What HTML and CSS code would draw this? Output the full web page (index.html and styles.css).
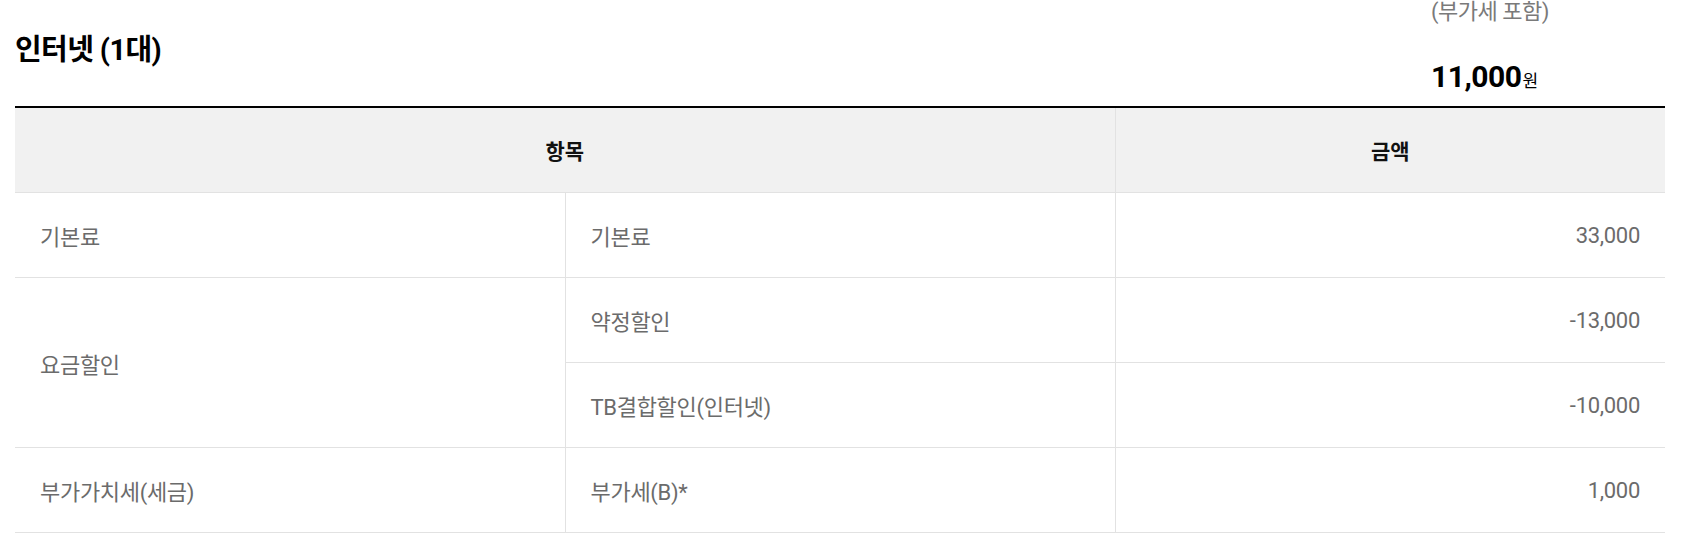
FILE: index.html
```html
<!DOCTYPE html>
<html lang="ko">
<head>
<meta charset="utf-8">
<title>인터넷 요금</title>
<link rel="stylesheet" href="styles.css">
</head>
<body>
<div class="wrap">
  <div class="head">
    <h2 class="title">인터넷 (1대)</h2>
    <div class="price">
      <span class="vat">(부가세 포함)</span>
      <span class="amount">11,000<span class="won">원</span></span>
    </div>
  </div>
  <table class="bill">
    <colgroup><col><col><col></colgroup>
    <thead>
      <tr><th colspan="2">항목</th><th class="amt-h">금액</th></tr>
    </thead>
    <tbody>
      <tr><td class="c1">기본료</td><td class="c2">기본료</td><td class="c3">33,000</td></tr>
      <tr><td class="c1" rowspan="2">요금할인</td><td class="c2">약정할인</td><td class="c3">-13,000</td></tr>
      <tr><td class="c2">TB결합할인(인터넷)</td><td class="c3">-10,000</td></tr>
      <tr><td class="c1">부가가치세(세금)</td><td class="c2">부가세(B)*</td><td class="c3">1,000</td></tr>
    </tbody>
  </table>
</div>
</body>
</html>
```

FILE: styles.css
```css
html, body {
  margin: 0;
  padding: 0;
  background: #fff;
}
body {
  font-family: Roboto, "Noto Sans CJK KR", sans-serif;
  color: #111;
}
.wrap {
  padding: 0 37px 0 15px;
}
.head {
  display: flex;
  justify-content: space-between;
  align-items: flex-start;
  height: 106px;
}
.title {
  margin: 32px 0 0 0;
  font-size: 29px;
  font-weight: 700;
  line-height: 36px;
  letter-spacing: -0.6px;
  color: #000;
}
.price {
  display: flex;
  flex-direction: column;
  width: 234px;
}
.vat {
  margin-top: -3px;
  font-size: 22px;
  line-height: 30px;
  color: #7a7a7a;
  letter-spacing: -0.5px;
}
.amount {
  margin-top: 32px;
  font-size: 30px;
  font-weight: 700;
  line-height: 36px;
  color: #000;
  letter-spacing: -0.5px;
}
.won {
  font-size: 17px;
  font-weight: 400;
  margin-left: 1px;
}
.bill {
  width: 100%;
  border-collapse: collapse;
  table-layout: fixed;
  border-top: 2px solid #000;
}
.bill th {
  height: 84px;
  background: #f1f1f1;
  font-size: 21px;
  font-weight: 700;
  color: #111;
  border-bottom: 1px solid #e2e2e2;
  padding: 0;
}
.bill th.amt-h {
  border-left: 1px solid #e2e2e2;
}
.bill td {
  height: 84px;
  padding: 0 25px;
  font-size: 22px;
  color: #6b6b6b;
  letter-spacing: -0.3px;
  border-bottom: 1px solid #e2e2e2;
  border-left: 1px solid #e2e2e2;
}
.bill td.c1 {
  border-left: none;
}
.bill td.c3 {
  text-align: right;
}
```
